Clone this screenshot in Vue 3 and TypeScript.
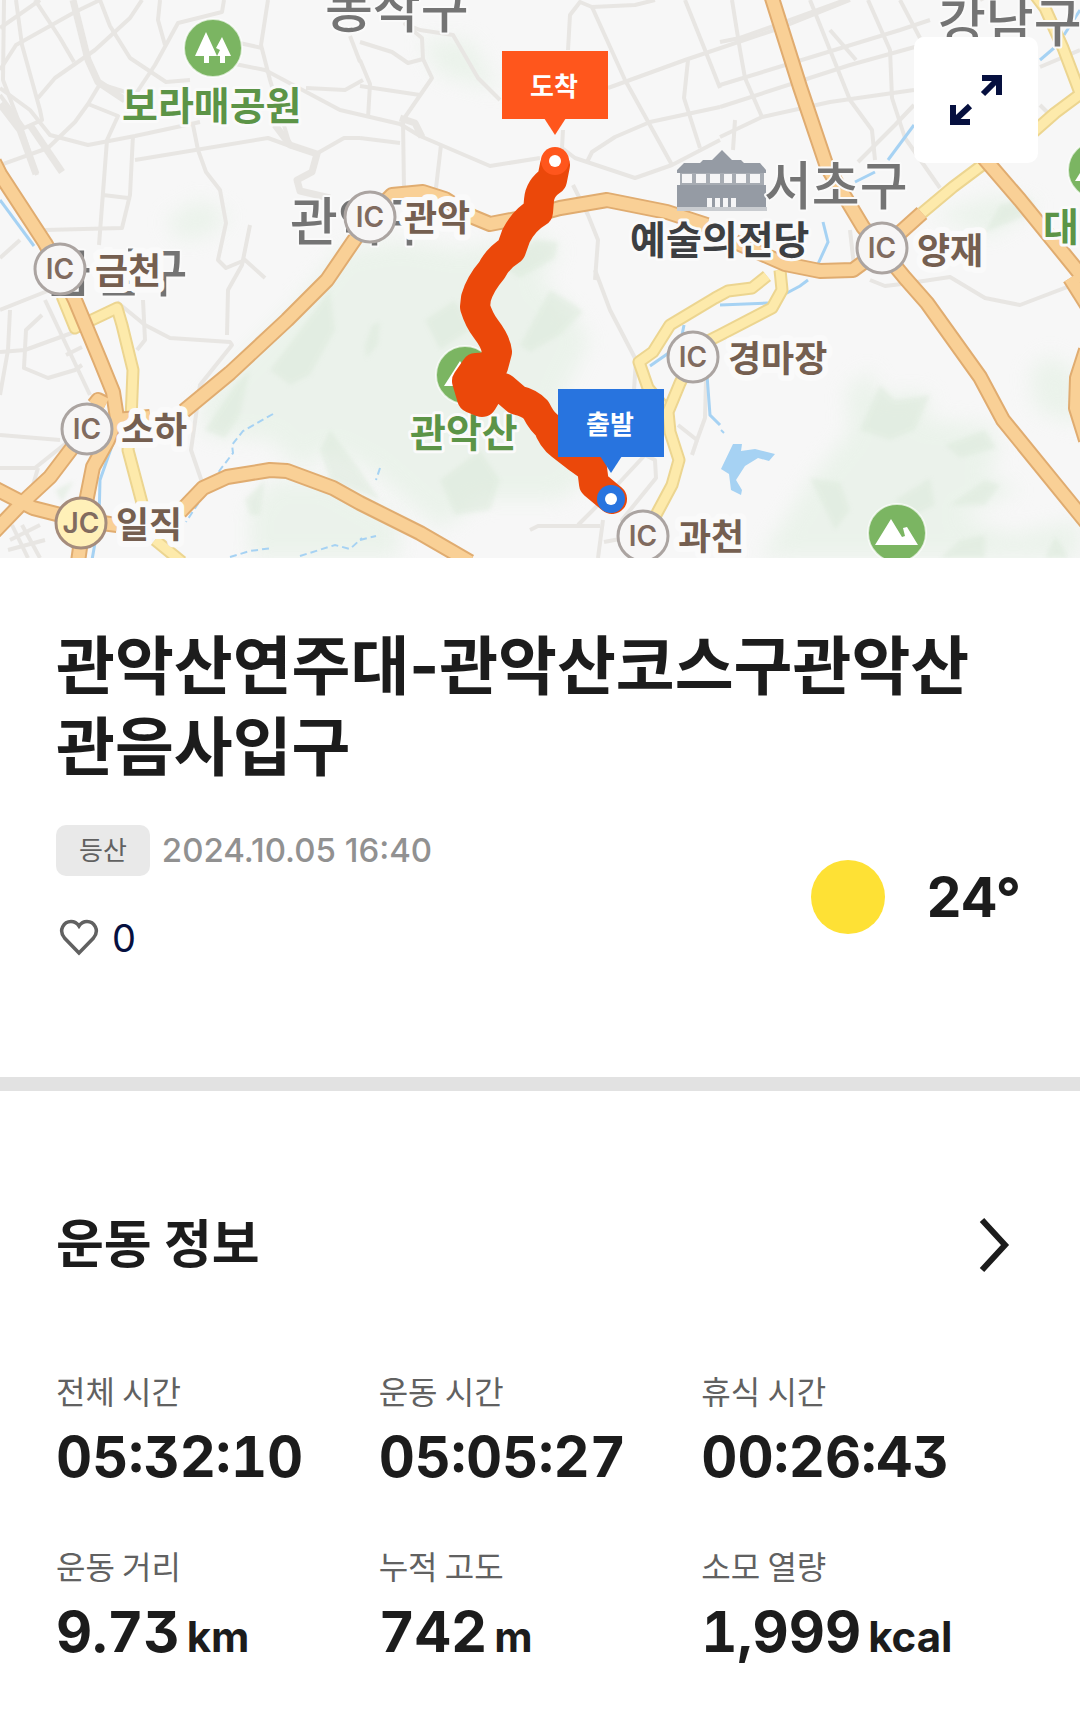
<script setup lang="ts">
interface Junction {
  code: 'IC' | 'JC'
  x: number
  y: number
  name: string
  labelX: number
  labelY: number
}

interface PlaceLabel {
  name: string
  x: number
  y: number
  kind: 'district' | 'green' | 'landmark'
}

interface Marker {
  name: string
  x: number
  y: number
  color: string
  boxTop: number
}

interface Stat {
  label: string
  value: string
  unit?: string
}

const streets: string[] = [
  'M0 28 L40 0', 'M0 70 L16 45 L75 12 L100 0', 'M16 0 L22 45 L40 110 L42 120 L24 128 L0 95',
  'M4 0 L3 80 L22 130 L37 175', 'M35 0 L60 38 L74 62', 'M100 0 L110 26 L130 58 L166 82 L190 80',
  'M142 0 L130 18 L95 50 L55 78 L38 98', 'M160 0 L158 20 L165 45', 'M224 0 L222 12 L178 23 L155 65 L135 95 L100 84 L88 104 L75 122 L48 148 L0 165',
  'M0 88 L30 110 L50 135 L88 145 L135 136 L200 122', 'M88 104 L118 116 L107 140 L99 245', 'M133 135 L130 195 L122 228 L45 230',
  'M103 195 L128 198', 'M135 160 L268 138 L290 146 L316 154 L344 138 L360 138', 'M193 125 L198 150 L206 172 L220 190 L226 223 L218 260 L226 268 L245 260 L265 278',
  'M268 0 L261 45 L270 80 L290 145', 'M235 64 L265 70 L340 110 L400 124 L420 136 L490 166 L540 158',
  'M235 42 L262 48', 'M306 88 L345 90 L363 80', 'M360 42 L392 52 L408 63 L423 59 L422 38 L405 24 L420 30 L453 35 L478 78 L500 100',
  'M423 59 L432 78 L403 120 L404 190', 'M360 60 L370 84 L368 118', 'M360 86 L420 95', 'M360 138 L400 143', 'M441 145 L436 188',
  'M350 36 L360 62', 'M568 50 L570 15 L580 2 L592 7 L635 5 L655 0', 'M592 7 L625 80 L672 165', 'M685 0 L705 50 L720 88',
  'M563 130 L562 148 L575 158 L587 162 L635 178 L672 165 L720 140', 'M587 162 L592 152 L615 137 L650 122 L720 107',
  'M608 88 L685 60 L780 28 L850 0', 'M688 60 L684 98 L700 148', 'M573 185 L588 215 L598 240 L595 280', 'M595 270 L610 310 L636 360 L634 390',
  'M720 42 L740 38 L845 0', 'M720 85 L900 30 L930 20', 'M720 107 L850 65 L940 40', 'M720 137 L762 117 L830 102 L914 90',
  'M732 0 L740 50 L745 78 L762 117', 'M735 120 L733 150', 'M810 0 L850 100 L872 130 L875 160', 'M830 30 L856 60', 'M868 0 L890 50 L892 98 L905 138 L940 188',
  'M900 0 L920 38', 'M914 105 L895 125 L858 162', 'M1040 105 L1047 112', 'M1040 67 L1080 50',
  'M0 258 L20 240', 'M0 310 L50 290 L35 265', 'M10 310 L8 350 L0 395', 'M0 352 L25 350 L80 330', 'M45 300 L90 395',
  'M42 315 L26 330 L24 368 L48 378 L75 370 L82 365', 'M66 355 L82 347', 'M143 300 L145 340 L137 350', 'M117 302 L145 325 L170 338 L230 342 L232 345 L200 385 L196 415 L191 450 L203 485',
  'M250 225 L242 265 L228 290 L227 335', 'M0 435 L60 440', 'M0 468 L35 468 L70 440', 'M33 485 L38 468', 'M12 525 L28 558', 'M8 550 L45 540', 'M22 525 L40 558', 'M10 540 L40 525',
  'M678 425 L697 440 L705 418 L706 380', 'M697 440 L692 455', 'M530 530 L538 526 L600 526', 'M578 525 L605 498 L645 455 L655 460 L656 478 L622 520 L645 532',
  'M603 520 L598 558', 'M604 542 L625 538', 'M870 280 L885 286 L910 283 L950 277 L985 298 L1020 305 L1080 282', 'M855 275 L850 230', 'M980 0 L1000 -10'
]

const wideStreets: string[] = [
  'M73 0 L88 60 L98 82 L125 100', 'M0 104 L20 130 L36 174', 'M30 125 L62 172',
  'M275 125 L290 145 L317 154 L312 172 L297 180 L300 191 L330 198', 'M400 118 L415 123 L422 137'
]

const highways: string[] = [
  'M-6 162 L0 174 L45 243 L60 270 L75 300 L100 360 L113 392 L117 418 L108 440 L93 467 L87 497 L78 562',
  'M94 405 L98 400 L106 404', 'M115 420 L150 417', 'M-6 532 L22 503 L50 477 L72 448 L87 428',
  'M-6 488 L33 508 L80 520 L117 525', 'M180 512 L203 488 L227 477 L270 470 L287 471 L333 488 L360 503 L420 533 L470 562',
  'M184 411 L230 373 L287 320 L327 280 L370 217 L392 195 L423 192 L445 199 L473 217 L490 224 L527 217 L560 208 L607 200 L667 212 L707 225',
  'M735 242 L785 264 L820 271 L853 270 L883 248 L922 213',
  'M771 -5 L800 87 L827 167 L863 227 L905 278 L927 303 L980 377 L1003 420 L1086 522',
  'M983 157 L1020 200 L1090 286', 'M1070 278 L1090 310', 'M1086 350 L1077 378 L1076 408 L1086 440'
]

const yellowRoads: string[] = [
  'M62 296 L75 328 L117 308 L122 325 L133 370 L131 420 L128 450 L142 503', 'M155 540 L182 562',
  'M1035 -5 L1045 8 L1063 48 L1080 93', 'M922 213 L953 187 L985 163', 'M1030 135 L1055 113 L1086 90',
  'M767 276 L752 288 L728 291 L715 298 L670 325 L653 352 L639 362 L648 388 L662 405',
  'M780 270 L782 290 L772 308 L720 335 L700 345', 'M693 357 L680 383 L668 412 L670 432 L679 460 L672 485 L656 515 L643 540'
]

const streams: string[] = [
  'M1080 10 L1064 35', 'M1054 48 L1040 60', 'M914 125 L888 160', 'M875 172 L855 182', 'M823 222 L828 242 L818 264',
  'M720 305 L768 303', 'M808 280 L800 286 L785 294', 'M684 325 L680 345 L650 366', 'M707 375 L710 415 L720 425',
  'M114 440 L100 480 L99 520 L92 560', 'M0 200 L34 246'
]

const creeks: string[] = [
  'M273 414 L243 431 L232 445 L233 453 L220 470 L186 522', 'M230 557 L250 551 L272 548', 'M300 556 L335 545 L350 549 L362 538',
  'M360 540 L376 536', 'M380 468 L376 480', 'M721 430 L724 433'
]

const hills: string[] = [
  'M200 400 L250 350 L300 300 L340 250 L400 240 L460 250 L540 235 L560 250 L540 280 L570 310 L590 340 L560 400 L600 470 L560 500 L480 500 L440 530 L370 470 L330 450 L300 470 L270 440 L205 435 Z',
  'M250 510 L270 480 L330 480 L400 520 L400 558 L250 558 Z',
  'M760 558 L810 480 L850 430 L845 390 L870 370 L880 395 L930 393 L925 420 L990 425 L1000 450 L985 475 L1020 490 L960 515 L1010 535 L1080 520 L1080 558 Z',
  'M1030 370 L1050 355 L1080 375 L1080 425 L1035 410 Z', 'M930 215 L1000 195 L1040 205 L990 235 Z',
  'M165 220 L200 200 L230 215 L210 235 L180 240 Z', 'M420 40 L470 40 L500 90 L440 75 Z'
]

const deepHills: string[] = [
  'M270 370 L300 330 L330 290 L335 330 L310 375 L290 385 Z', 'M205 430 L235 385 L250 370 L240 415 L225 438 Z',
  'M365 345 L372 325 L380 322 L378 345 L366 358 Z', 'M520 345 L550 290 L575 305 L583 312 L560 335 L530 352 Z', 'M500 265 L535 240 L558 242 L555 258 L520 278 Z',
  'M440 480 L480 450 L500 480 L490 510 L455 515 Z', 'M425 320 L455 300 L470 330 L440 350 Z', 'M320 450 L330 430 L360 470 L380 500 L330 480 Z',
  'M245 500 L265 480 L260 515 L250 515 Z', 'M860 430 L880 385 L895 400 L930 395 L915 430 L890 440 Z', 'M945 445 L985 430 L996 448 L960 458 Z',
  'M950 505 L985 480 L1000 485 L985 505 Z', 'M895 500 L930 478 L935 505 L915 515 Z', 'M960 540 L985 535 L985 558 L940 558 Z', 'M1045 558 L1055 537 L1065 550 L1068 558 Z',
  'M810 478 L840 482 L850 510 L835 530 Z', 'M55 490 L74 481 L62 502 Z', 'M985 232 L1000 205 L1030 198 L1035 212 Z'
]

const places: PlaceLabel[] = [
  { name: '동작구', x: 325, y: 28, kind: 'district' },
  { name: '강남구', x: 938, y: 42, kind: 'district' },
  { name: '서초구', x: 764, y: 205, kind: 'district' },
  { name: '관악구', x: 290, y: 241, kind: 'district' },
  { name: '금천구', x: 44, y: 292, kind: 'district' },
  { name: '보라매공원', x: 122, y: 120, kind: 'green' },
  { name: '관악산', x: 410, y: 447, kind: 'green' },
  { name: '대', x: 1043, y: 241, kind: 'green' },
  { name: '예술의전당', x: 630, y: 254, kind: 'landmark' }
]

const junctions: Junction[] = [
  { code: 'IC', x: 60, y: 269, name: '금천', labelX: 95, labelY: 284 },
  { code: 'IC', x: 370, y: 217, name: '관악', labelX: 404, labelY: 231 },
  { code: 'IC', x: 882, y: 248, name: '양재', labelX: 917, labelY: 264 },
  { code: 'IC', x: 693, y: 357, name: '경마장', labelX: 728, labelY: 372 },
  { code: 'IC', x: 87, y: 429, name: '소하', labelX: 121, labelY: 443 },
  { code: 'JC', x: 81, y: 523, name: '일직', labelX: 116, labelY: 538 },
  { code: 'IC', x: 643, y: 536, name: '과천', labelX: 678, labelY: 550 }
]

const markers: Marker[] = [
  { name: '도착', x: 555, y: 161, color: '#ff561c', boxTop: 51 },
  { name: '출발', x: 611, y: 499, color: '#2874df', boxTop: 389 }
]

const stats: Stat[] = [
  { label: '전체 시간', value: '05:32:10' },
  { label: '운동 시간', value: '05:05:27' },
  { label: '휴식 시간', value: '00:26:43' },
  { label: '운동 거리', value: '9.73', unit: 'km' },
  { label: '누적 고도', value: '742', unit: 'm' },
  { label: '소모 열량', value: '1,999', unit: 'kcal' }
]
</script>

<template>
  <main class="page">
    <section class="map" aria-label="경로 지도">
      <svg class="map-canvas" viewBox="0 0 1080 558">
        <rect width="1080" height="558" fill="#f7f7f7" />
        <path v-for="d in hills" :key="d" :d="d" class="hill" />
        <path v-for="d in deepHills" :key="d" :d="d" class="hill-deep" />
        <path v-for="d in streets" :key="d" :d="d" class="street" />
        <path v-for="d in wideStreets" :key="d" :d="d" class="street wide" />
        <path v-for="d in streams" :key="d" :d="d" class="stream" />
        <path v-for="d in creeks" :key="d" :d="d" class="stream creek" />
        <path
          fill="#a6d2f3"
          d="M733 444 L742 444 L741 451 L755 449 L775 454 L769 461 L758 458 L745 466 L736 480 L742 490 L741 495 L731 490 L729 474 L721 469 Z"
        />
        <path v-for="d in yellowRoads" :key="d + 'c'" :d="d" class="road yellow-case" />
        <path v-for="d in yellowRoads" :key="d" :d="d" class="road yellow" />
        <path v-for="d in highways" :key="d + 'c'" :d="d" class="road orange-case" />
        <path v-for="d in highways" :key="d" :d="d" class="road orange" />

        <g fill="#959ba4">
          <path d="M677 170 L684 163 H700 L703 160 H712 L722 150 L732 160 H741 L744 163 H760 L766 170 V173 H677 Z" />
          <path d="M680 173 H764 V185 H680 Z" fill="#a7acb3" />
          <path d="M677 185 H766 V207 H677 Z" />
          <path d="M677 207 H767 V211 H677 Z" fill="#c9ccd0" />
          <path
            d="M682 174 h10 v9 h-10z M696 174 h10 v9 h-10z M710 174 h10 v9 h-10z M724 174 h8 v9 h-8z M736 174 h10 v9 h-10z M750 174 h10 v9 h-10z M707 198 h5 v9 h-5z M715 198 h5 v9 h-5z M723 198 h5 v9 h-5z M731 198 h5 v9 h-5z"
            fill="#f5f5f6"
          />
        </g>

        <g class="poi">
          <circle cx="213" cy="48" r="29" />
          <circle cx="465" cy="375" r="29" />
          <circle cx="897" cy="533" r="29" />
          <circle cx="1097" cy="170" r="29" />
        </g>
        <g fill="#fff">
          <path d="M206 32 L217 56 H209 V63 H204 V56 H195 Z" />
          <path d="M222 37 L231 56 H225 V63 H220 V56 H217 L220 50 L216 48 Z" />
          <path d="M444 386 L460 361 L475 386 Z" />
          <path d="M875 545 L891 519 L902 537 L905 536 L903 528 L907 527 L918 545 Z" />
          <path d="M1075 181 L1090 157 L1110 181 Z" />
        </g>

        <text v-for="p in places" :key="p.name" :x="p.x" :y="p.y" :class="['place', p.kind]">{{ p.name }}</text>

        <g v-for="j in junctions" :key="j.name">
          <circle :cx="j.x" :cy="j.y" r="25" :class="['junction', { jc: j.code === 'JC' }]" />
          <text :x="j.x" :y="j.y + 10" class="junction-code">{{ j.code }}</text>
          <text :x="j.labelX" :y="j.labelY" class="place exit">{{ j.name }}</text>
        </g>

        <path
          class="route"
          d="M555 165 L552 180 Q540 188 539 200 L538 212 Q524 220 516 236 L511 250 Q498 258 492 270 Q480 284 476 298 L475 307 Q479 320 486 329 Q496 342 497 352 L493 367 L476 368 L467 381 L472 398 L482 402 L488 392 L480 382 L503 388 L517 400 Q530 403 536 410 Q542 422 548 426 Q552 438 561 445 L578 458 L592 468 L594 484 L612 499"
        />

        <g v-for="m in markers" :key="m.name">
          <rect :x="m.x - 53" :y="m.boxTop" width="106" height="68" :fill="m.color" />
          <path :d="`M${m.x - 11} ${m.boxTop + 67} h22 l-11 17 z`" :fill="m.color" />
          <text :x="m.x - 1" :y="m.boxTop + 45" class="marker-name">{{ m.name }}</text>
          <circle :cx="m.x" :cy="m.y" r="14" :fill="m.color" />
          <circle :cx="m.x" :cy="m.y" r="6" fill="#fff" />
        </g>
      </svg>
      <button class="expand" type="button" aria-label="지도 확대">
        <svg width="52" height="50" viewBox="0 0 52 50" fill="none" stroke="#06103f" stroke-width="6">
          <path d="M32 3 H49 V20 M49 3 L33 19" />
          <path d="M3 30 V47 H20 M3 47 L20 31" />
        </svg>
      </button>
    </section>

    <section class="summary">
      <h1>관악산연주대-관악산코스구관악산관음사입구</h1>
      <div class="details">
        <div class="meta">
          <div class="when">
            <span class="badge">등산</span>
            <time datetime="2024-10-05T16:40">2024.10.05 16:40</time>
          </div>
          <button class="like" type="button" aria-label="좋아요">
            <svg width="40" height="38" viewBox="0 0 40 38" fill="none" stroke="#616161" stroke-width="3.5">
              <path d="M20 34 L5.500 19 C-1 11 5 2.500 12 2.500 C15.500 2.500 18 4 20 7 C22 4 24.500 2.500 28 2.500 C35 2.500 41 11 34.500 19 Z" />
            </svg>
            <span>0</span>
          </button>
        </div>
        <div class="weather">
          <span class="sun" role="img" aria-label="맑음"></span>
          <span>24°</span>
        </div>
      </div>
    </section>

    <section class="workout">
      <header>
        <h2>운동 정보</h2>
        <button class="more" type="button" aria-label="운동 정보 더보기">
          <svg width="32" height="56" viewBox="0 0 32 56" fill="none" stroke="#1c1c1c" stroke-width="6">
            <path d="M4 3 L27 28 L4 53" />
          </svg>
        </button>
      </header>
      <dl>
        <div v-for="s in stats" :key="s.label">
          <dt>{{ s.label }}</dt>
          <dd>{{ s.value }}<span v-if="s.unit" class="unit">{{ s.unit }}</span></dd>
        </div>
      </dl>
    </section>
  </main>
</template>

<style>
body {
  margin: 0;
  background: #fff;
}
</style>

<style scoped>
.page {
  font-family: Inter, 'Noto Sans CJK KR', sans-serif;
  color: #1c1c1c;
}

button {
  border: 0;
  padding: 0;
  background: none;
  font: inherit;
  cursor: pointer;
}

.map {
  position: relative;
}

.map-canvas {
  display: block;
  width: 100%;
}

.hill {
  fill: #e6f1e6;
  opacity: 0.7;
  filter: blur(10px);
}

.hill-deep {
  fill: #dbe9da;
  opacity: 0.5;
  filter: blur(2px);
}

.street {
  fill: none;
  stroke: #e8e6e3;
  stroke-width: 4;
  stroke-linejoin: round;
}

.street.wide {
  stroke-width: 7;
}

.stream {
  fill: none;
  stroke: #a6d2f3;
  stroke-width: 3;
}

.stream.creek {
  stroke-width: 2;
  stroke-dasharray: 7 4;
}

.road {
  fill: none;
  stroke-linejoin: round;
}

.yellow-case {
  stroke: #ecd590;
  stroke-width: 13;
}

.yellow {
  stroke: #fdeaab;
  stroke-width: 9;
}

.orange-case {
  stroke: #e0ac70;
  stroke-width: 16;
}

.orange {
  stroke: #f9d096;
  stroke-width: 12;
}

.poi {
  fill: #7bb562;
  stroke: #fff;
  stroke-opacity: 0.7;
  stroke-width: 2;
}

.place {
  paint-order: stroke;
  stroke: #fafafa;
  stroke-width: 6;
  stroke-linejoin: round;
  font-family: 'Noto Sans CJK KR', sans-serif;
  font-size: 39px;
  font-weight: 700;
}

.place.district {
  font-size: 52px;
  font-weight: 500;
  fill: #747474;
  stroke-width: 4;
}

.place.green {
  fill: #5c9447;
}

.place.landmark {
  fill: #3d3f42;
}

.place.exit {
  font-size: 36px;
  fill: #755f50;
  stroke-width: 12;
}

.junction {
  fill: #f7f6f6;
  stroke: #aba4a1;
  stroke-width: 3;
}

.junction.jc {
  fill: #fff0b8;
  stroke: #a58c7c;
}

.junction-code {
  font-size: 28px;
  font-weight: 600;
  fill: #816b5f;
  text-anchor: middle;
}

.route {
  fill: none;
  stroke: #eb480a;
  stroke-width: 30;
  stroke-linecap: round;
  stroke-linejoin: round;
}

.marker-name {
  font-family: 'Noto Sans CJK KR', sans-serif;
  font-size: 26px;
  font-weight: 700;
  fill: #fff;
  text-anchor: middle;
}

.expand {
  position: absolute;
  top: 37px;
  right: 42px;
  display: flex;
  align-items: center;
  justify-content: center;
  width: 124px;
  height: 126px;
  border-radius: 10px;
  background: #fff;
}

.summary {
  padding: 67px 56px 109px;
}

h1 {
  margin: 0 0 38px;
  font-size: 64px;
  line-height: 81px;
  font-weight: 700;
  word-break: break-all;
}

.details {
  display: flex;
  align-items: center;
  justify-content: space-between;
}

.meta {
  display: flex;
  flex-direction: column;
  align-items: flex-start;
  gap: 32px;
}

.when {
  display: flex;
  align-items: center;
  gap: 12px;
  color: #919191;
  font-size: 33px;
  line-height: 51px;
  font-weight: 500;
}

.badge {
  padding: 0 23px;
  border-radius: 10px;
  background: #e9e9e9;
  color: #616161;
  font-size: 26px;
  font-weight: 400;
}

.like {
  display: flex;
  align-items: center;
  gap: 13px;
  padding-left: 3px;
  color: #06103f;
  font-size: 38px;
  line-height: 60px;
}

.weather {
  display: flex;
  align-items: center;
  gap: 42px;
  padding-right: 3px;
  font-size: 55px;
  line-height: 72px;
  font-weight: 700;
}

.sun {
  width: 74px;
  height: 74px;
  border-radius: 50%;
  background: #fee135;
}

.workout {
  padding: 118px 56px 46px;
  border-top: 14px solid #e2e2e2;
}

header {
  display: flex;
  align-items: center;
  justify-content: space-between;
  margin-bottom: 87px;
}

h2 {
  margin: 0;
  font-size: 52px;
  line-height: 72px;
  font-weight: 700;
}

.more {
  display: flex;
  justify-content: center;
  width: 60px;
}

dl {
  display: grid;
  grid-template-columns: repeat(3, 1fr);
  row-gap: 54px;
  margin: 0;
}

dt {
  margin-bottom: 13px;
  color: #616161;
  font-family: 'Noto Sans CJK KR', sans-serif;
  font-size: 32px;
  line-height: 44px;
}

dd {
  margin: 0;
  font-size: 56px;
  line-height: 64px;
  font-weight: 700;
  font-feature-settings: 'tnum', 'cv09';
  white-space: nowrap;
}

.unit {
  margin-left: 7px;
  font-size: 42px;
}
</style>
